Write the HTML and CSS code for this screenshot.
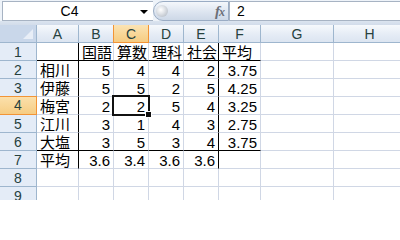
FILE: index.html
```html
<!DOCTYPE html>
<html lang="ja">
<head>
<meta charset="utf-8">
<link rel="stylesheet" href="styles.css">
</head>
<body>
<div class="app">
  <div class="fbar">
    <div class="namebox"><span class="ref">C4</span><span class="drop"></span></div>
    <div class="fxgroup"><span class="grip"></span><span class="fx"><i>f</i><i class="x">x</i></span></div>
    <div class="formula">2</div>
  </div>
  <div class="band"></div>
  <div class="sheet">
    <div class="corner"><span class="tri"></span></div>
    <div class="ch">A</div><div class="ch">B</div><div class="ch sel">C</div><div class="ch">D</div><div class="ch">E</div><div class="ch">F</div><div class="ch">G</div><div class="ch">H</div>

    <div class="rh">1</div>
    <div class="c bb br"></div><div class="c t bb">国語</div><div class="c t bb">算数</div><div class="c t bb">理科</div><div class="c t bb br">社会</div><div class="c t bb">平均</div><div class="c"></div><div class="c"></div>

    <div class="rh">2</div>
    <div class="c t br">相川</div><div class="c n">5</div><div class="c n">4</div><div class="c n">4</div><div class="c n br">2</div><div class="c n">3.75</div><div class="c"></div><div class="c"></div>

    <div class="rh">3</div>
    <div class="c t br">伊藤</div><div class="c n">5</div><div class="c n">5</div><div class="c n">2</div><div class="c n br">5</div><div class="c n">4.25</div><div class="c"></div><div class="c"></div>

    <div class="rh sel">4</div>
    <div class="c t br">梅宮</div><div class="c n">2</div><div class="c n active">2</div><div class="c n">5</div><div class="c n br">4</div><div class="c n">3.25</div><div class="c"></div><div class="c"></div>

    <div class="rh">5</div>
    <div class="c t br">江川</div><div class="c n">3</div><div class="c n">1</div><div class="c n">4</div><div class="c n br">3</div><div class="c n">2.75</div><div class="c"></div><div class="c"></div>

    <div class="rh">6</div>
    <div class="c t br bb">大塩</div><div class="c n bb">3</div><div class="c n bb">5</div><div class="c n bb">3</div><div class="c n br bb">4</div><div class="c n bb">3.75</div><div class="c"></div><div class="c"></div>

    <div class="rh">7</div>
    <div class="c t br">平均</div><div class="c n">3.6</div><div class="c n">3.4</div><div class="c n">3.6</div><div class="c n br">3.6</div><div class="c"></div><div class="c"></div><div class="c"></div>

    <div class="rh">8</div>
    <div class="c"></div><div class="c"></div><div class="c"></div><div class="c"></div><div class="c"></div><div class="c"></div><div class="c"></div><div class="c"></div>

    <div class="rh">9</div>
    <div class="c"></div><div class="c"></div><div class="c"></div><div class="c"></div><div class="c"></div><div class="c"></div><div class="c"></div><div class="c"></div>
  </div>
</div>
</body>
</html>
```

FILE: styles.css
```css
html, body {
  margin: 0;
  padding: 0;
  background: #ffffff;
}
.app {
  width: 400px;
  height: 200px;
  overflow: hidden;
  font-family: "Liberation Sans", "Noto Sans CJK JP", sans-serif;
}
.fbar {
  display: flex;
  height: 21px;
  box-sizing: border-box;
  padding: 1px 0 0 2px;
  background: #eef3f9;
}
.namebox {
  width: 151px;
  height: 20px;
  box-sizing: border-box;
  border: 1px solid #a7b3c3;
  border-right: none;
  background: #ffffff;
  display: flex;
  align-items: center;
  position: relative;
}
.ref {
  flex: 1;
  text-align: center;
  font-size: 14px;
  color: #000;
  padding-right: 4px;
  line-height: 18px;
}
.drop {
  width: 0;
  height: 0;
  border-left: 4px solid transparent;
  border-right: 4px solid transparent;
  border-top: 4px solid #000;
  margin-right: 5px;
  margin-top: 2px;
}
.fxgroup {
  width: 76px;
  height: 20px;
  box-sizing: border-box;
  display: flex;
  align-items: center;
  justify-content: space-between;
  border: 1px solid #9aacc4;
  border-radius: 10px 0 0 10px;
  background: linear-gradient(#f4f7fb, #dde5f0 55%, #cdd8e7);
  padding: 0 3px 0 2px;
}
.grip {
  width: 12px;
  height: 12px;
  border-radius: 50%;
  background: radial-gradient(circle at 40% 40%, #ffffff 0, #e3e6ea 35%, #a9b1bc 100%);
}
.fx {
  font-family: "Liberation Serif", serif;
  font-style: italic;
  font-weight: bold;
  font-size: 15px;
  color: #6b6f78;
  line-height: 16px;
}
.fx i { font-style: italic; }
.fx .x { font-size: 12px; margin-left: -1px; }
.formula {
  flex: 1;
  height: 20px;
  box-sizing: border-box;
  border: 1px solid #a7b3c3;
  border-right: none;
  background: #ffffff;
  font-size: 14px;
  line-height: 18px;
  padding-left: 7px;
}
.band {
  height: 4px;
  background: linear-gradient(#dbe4ef, #d2dcea);
}
.sheet {
  display: grid;
  grid-template-columns: 37px 42px 35px 35px 35px 35px 42px 73px 72px;
  grid-template-rows: 18px repeat(9, 18px);
}
.sheet > div {
  box-sizing: border-box;
}
.corner {
  background: #c9d7ea;
  border-right: 1px solid #9eb6ce;
  border-bottom: 1px solid #9eb6ce;
  position: relative;
}
.tri {
  position: absolute;
  right: 3px;
  bottom: 3px;
  width: 0;
  height: 0;
  border-left: 10px solid transparent;
  border-bottom: 10px solid #e8eef7;
}
.ch {
  background: linear-gradient(#f6f9fc, #e4ebf5 60%, #dce5f1);
  border-right: 1px solid #9eb6ce;
  border-bottom: 1px solid #9eb6ce;
  text-align: center;
  font-size: 14px;
  line-height: 18px;
  color: #27413e;
}
.ch.sel {
  background: linear-gradient(#fbe3b4, #f8d594 60%, #f6cc83);
  border-right: 1px solid #f29436;
  border-left: 1px solid #f29436;
  border-bottom: 1px solid #f29436;
  margin-left: -1px;
}
.rh {
  background: #e4ecf7;
  border-right: 1px solid #9eb6ce;
  border-bottom: 1px solid #9eb6ce;
  text-align: center;
  font-size: 14px;
  line-height: 18px;
  color: #27413e;
}
.rh.sel {
  background: linear-gradient(#fbe0ab, #f8d594 60%, #f6cc83);
  border-top: 1px solid #f29436;
  border-bottom: 1px solid #f29436;
  border-right: 1px solid #f29436;
  margin-top: -1px;
  height: 19px;
  line-height: 17px;
}
.c {
  border-right: 1px solid #d0d7e5;
  border-bottom: 1px solid #d0d7e5;
  font-size: 15px;
  line-height: 17px;
  padding-top: 1px;
  white-space: nowrap;
  overflow: visible;
  color: #000;
}
.c.t {
  padding-left: 3px;
  text-align: left;
}
.c.n {
  padding-right: 3px;
  text-align: right;
}
.c.br {
  border-right-color: #000;
}
.c.bb {
  border-bottom-color: #000;
}
.active {
  position: relative;
}
.active::after {
  content: "";
  position: absolute;
  left: -2px;
  top: -2px;
  right: -2px;
  bottom: -2px;
  border: 2px solid #111;
}
.active::before {
  content: "";
  position: absolute;
  right: -4px;
  bottom: -4px;
  width: 5px;
  height: 5px;
  background: #111;
  border: 1px solid #fff;
  z-index: 2;
}
```
